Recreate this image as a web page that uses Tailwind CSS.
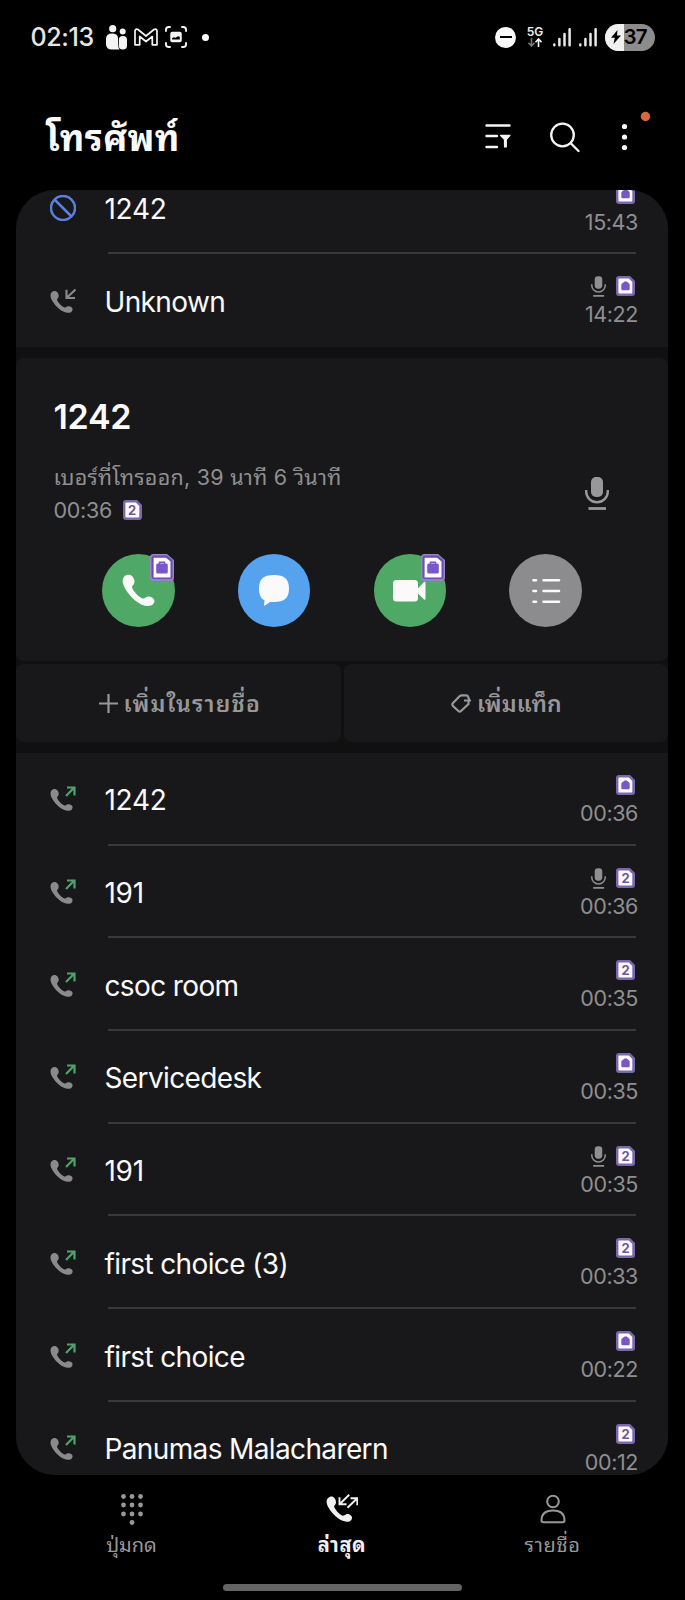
<!DOCTYPE html>
<html lang="th">
<head>
  <meta charset="utf-8" />
  <title>โทรศัพท์</title>
  <meta name="viewport" content="width=device-width, initial-scale=1" />
  <script src="https://cdn.jsdelivr.net/npm/@tailwindcss/browser@4"></script>
</head>
<body class="bg-black text-[#fafafa] font-['Inter','Noto_Sans_Thai_Looped','Loma','Waree','Garuda','Noto_Sans_Thai','Noto_Sans',sans-serif]">
<svg class="hidden">
  <symbol id="phone" viewBox="0 0 24 24">
    <path d="M3.2 0.8C0.7 2 .1 4.4.8 7.2c1.600 5.200 7.800 12.400 13.600 15.100 2.900 1.300 6.600 1.600 8.300-.4 1.300-1.500 1.200-3.200-.2-4.300-1.400-1.100-3.100-1.600-4.600-.9-1.200.600-1.900 1.500-3.300.9C11.900 16.500 8.700 12.900 7.500 10.300c-.6-1.500.8-2 1.300-3.200.6-1.500.200-3.400-.9-4.900C6.700.500 4.900.100 3.200.800Z" fill="currentColor"/>
  </symbol>
  <symbol id="out" viewBox="0 0 26 26">
    <use href="#phone" x="0" y="2.500" width="23" height="23"/>
    <path d="M16 10 24.300 1.500M17 1.500h7.500v8" fill="none" stroke="#4fa36a" stroke-width="2.200"/>
  </symbol>
  <symbol id="in" viewBox="0 0 26 26">
    <use href="#phone" x="0" y="2.500" width="23" height="23"/>
    <path d="M25.500 1.500 17 9.500M16.500 1.800v8.200h8.500" fill="none" stroke="currentColor" stroke-width="2.100"/>
  </symbol>
  <symbol id="blocked" viewBox="0 0 26 26">
    <path d="M13 1a12 12 0 1 0 0 24 12 12 0 0 0 0-24ZM4.500 4.500l17 17" fill="none" stroke="#5b7fdc" stroke-width="2.500"/>
  </symbol>
  <symbol id="mic" viewBox="0 0 24 33">
    <rect x="6" y="0" width="12" height="20" rx="5" fill="currentColor"/>
    <path d="M1.200 13v1.500a10.800 10.800 0 0 0 21.600 0V13" fill="none" stroke="currentColor" stroke-width="2.400"/>
    <path d="M3.500 31.500h17.500" stroke="currentColor" stroke-width="2.800"/>
  </symbol>
  <symbol id="sim" viewBox="0 0 19 20">
    <path d="M3 0h11L19 5v12a3 3 0 0 1-3 3H3A3 3 0 0 1 0 17V3A3 3 0 0 1 3 0Z" fill="#7a68ae"/>
    <path d="M3.400 2.500h9.400L16.300 6v10.500q0 1-1 1H3.400q-1 0-1-1v-13q0-1 1-1Z" fill="#fdf9ff"/>
  </symbol>
  <symbol id="bag" viewBox="0 0 19 20">
    <use href="#sim" width="19" height="20"/>
    <path d="M7 6.800 8.500 5.500h2.200l1.500 1.300c1 .4 1.500 1.200 1.500 2.400v3.600c0 1-.6 1.500-1.500 1.500H6.800c-.9 0-1.500-.5-1.500-1.500V9.200C5.300 8 6 7.200 7 6.800Z" fill="#7757c4"/>
  </symbol>
  <symbol id="bagLg" viewBox="0 0 24 27">
    <path d="M3.500 0h13.500L24 6v17.500a3.500 3.500 0 0 1-3.500 3.500h-17A3.500 3.500 0 0 1 0 23.500v-20A3.500 3.500 0 0 1 3.500 0Z" fill="#9488bb"/>
    <path d="M4 1.500h13L22.500 6v16.500a2.500 2.500 0 0 1-2.500 2.500H4a2.500 2.500 0 0 1-2.500-2.500V4A2.500 2.500 0 0 1 4 1.500Z" fill="#6b4db5"/>
    <path d="M3.600 3.700h12.500L20.500 7.500v16H3.600Z" fill="#fdf9ff"/>
    <path d="M9.500 10V8.300h5V10" fill="none" stroke="#7757c4" stroke-width="1.400"/>
    <rect x="6.200" y="9.500" width="11.600" height="10" rx="1.500" fill="#7757d0"/>
  </symbol>
</svg>

<div class="w-[685px] h-[1600px] flex flex-col overflow-hidden">
  <!-- status bar -->
  <div class="h-[74px] shrink-0 flex items-center justify-between pl-[30.500px] pr-[30.500px]">
    <div class="flex items-center">
      <span class="w-[64px] pt-px text-[25px] leading-none font-medium text-[#e6e6e6] whitespace-nowrap tracking-[-0.4px]">02:13</span>
      <svg class="ml-[11.500px] w-[21px] h-[25px]" viewBox="0 0 21 25" fill="#f5f5f5">
        <circle cx="6.700" cy="3.700" r="3.600"/><circle cx="16.700" cy="6.600" r="3"/>
        <path d="M0 14q0-5.500 6-5.500t6 4.500v6q0 3 1.500 5.500H6q-6 0-6-5.500Z"/>
        <rect x="12.800" y="11" width="8.200" height="13.500" rx="4"/>
      </svg>
      <svg class="ml-[7px] w-[24px] h-[18px]" viewBox="0 0 24 18" fill="none" stroke="#f5f5f5" stroke-width="1.700" stroke-linejoin="round">
        <path d="M1 16.800V3Q1.500.500 4 1.500L12 8l8-6.500q2.500-1 3 1.500v13.800h-4.700V8.500L12 13.500 5.700 8.500v8.300Z"/>
      </svg>
      <svg class="ml-[7px] w-[22px] h-[22px]" viewBox="0 0 23 23">
        <path d="M1 6V4q0-3 3-3h2M17 1h2q3 0 3 3v2M22 17v2q0 3-3 3h-2M6 22H4q-3 0-3-3v-2" fill="none" stroke="#f5f5f5" stroke-width="2"/>
        <rect x="5.500" y="6" width="12" height="11" rx="2" fill="#f5f5f5"/>
        <path d="M7.500 14v-1.500l2-.8 1.500.6 2.500-1.700 2 .6V14Z" fill="#000"/>
      </svg>
      <span class="ml-[15px] size-[7px] rounded-full bg-white"></span>
    </div>
    <div class="flex items-center">
      <span class="size-[21px] rounded-full bg-[#fafafa] flex items-center justify-center"><span class="w-[12px] h-[2px] bg-black"></span></span>
      <div class="ml-[11px] w-[16px] flex flex-col items-center">
        <span class="text-[12px] leading-[10px] font-semibold text-[#eee]">5G</span>
        <svg class="mt-[1px] w-[14px] h-[9px]" viewBox="0 0 14 9" fill="none" stroke-width="1.600">
          <path d="M3.500 0v8M.5 4.800 3.500 8l3-3.200" stroke="#777"/><path d="M10.500 9V1M7.500 4.200l3-3.200 3 3.200" stroke="#f5f5f5"/>
        </svg>
      </div>
      <svg class="ml-[9.500px] w-[18px] h-[19px]" viewBox="0 0 18 19" stroke="#e8e8e8" stroke-width="2.500" stroke-linecap="round">
        <path d="M1.300 16.500v.8M6.400 11v6.300M11.500 6v11.300M16.600 1.200v16.100"/>
      </svg>
      <svg class="ml-[8.500px] w-[18px] h-[19px]" viewBox="0 0 18 19" stroke="#e8e8e8" stroke-width="2.500" stroke-linecap="round">
        <path d="M1.300 16.500v.8M6.400 11v6.300M11.500 6v11.300M16.600 1.200v16.100"/>
      </svg>
      <div class="ml-[7.500px] w-[50px] h-[27px] rounded-full overflow-hidden bg-[#8c8c8c] flex items-center text-black">
        <div class="w-[19px] h-full bg-[#f0f0f0] flex items-center justify-end">
          <svg class="w-[10px] h-[14px] mr-[3px]" viewBox="0 0 10 14"><path d="M6.500 0 0 7.800h3.800L2.500 14 10 5.500H6Z"/></svg>
        </div>
        <span class="pt-px text-[20.500px] leading-none font-semibold tracking-[-0.7px]">37</span>
      </div>
    </div>
  </div>

  <!-- title bar -->
  <div class="h-[116px] shrink-0 flex items-start pt-[40px]">
    <h1 class="ml-[46px] w-[138px] h-[45px] pt-[2px] text-[36px] leading-[45px] font-bold whitespace-nowrap tracking-[0.3px]">โทรศัพท์</h1>
    <svg class="ml-[301px] mt-[9px] w-[26px] h-[26px]" viewBox="0 0 26 26" stroke="#f5f5f5" stroke-width="2.400" stroke-linecap="round">
      <path d="M1.500 2.500h23M1.500 13h10.500M1.500 24h10.500"/>
      <path d="M15.500 12.300h9.500l-3.700 4.400v7.300h-1.800v-7.300Z" fill="#f5f5f5" stroke-width="1.200" stroke-linejoin="round"/>
    </svg>
    <svg class="ml-[39px] mt-[7.500px] w-[30px] h-[31px]" viewBox="0 0 30 31" fill="none" stroke="#f5f5f5" stroke-width="2.300" stroke-linecap="round">
      <circle cx="12.500" cy="13" r="11.300"/><path d="m20.500 21 8 8"/>
    </svg>
    <svg class="ml-[41px] -mt-[3px] w-[30px] h-[40px]" viewBox="0 0 30 40" fill="#fafafa">
      <circle cx="3.500" cy="15.500" r="2.600"/><circle cx="3.500" cy="26" r="2.600"/><circle cx="3.500" cy="36.500" r="2.600"/>
      <circle cx="24.500" cy="5.500" r="4.700" fill="#d9673a"/>
    </svg>
  </div>

  <!-- call log -->
  <main class="ml-[16px] w-[652px] h-[1284.500px] shrink-0 rounded-[39px] overflow-hidden bg-[#101011]">
    <div id="older" class="-mt-[28.500px] bg-[#18181a]"></div>

    <section class="mt-[11.500px] h-[302.500px] rounded-[8px] bg-[#18181a]">
      <div class="h-[196px] flex items-start justify-between">
        <div class="pl-[37.500px] pt-[36.500px]">
          <h2 class="text-[34px] leading-[44px] font-semibold tracking-[-0.3px]">1242</h2>
          <p class="mt-[22px] h-[33px] text-[21.500px] leading-[33px] text-[#8f8f91] whitespace-nowrap tracking-[0.260px]">เบอร์ที่โทรออก, 39 นาที 6 วินาที</p>
          <p class="flex items-center text-[21.500px] leading-[33px] text-[#8f8f91]">
            <span class="w-[69px] tracking-[-0.3px]">00:36</span>
            <span class="relative w-[19px] h-[20px]"><svg class="block w-[19px] h-[20px]"><use href="#sim"/></svg><b class="absolute inset-0 text-center text-[13px] leading-[20px] text-[#6b5a98]">2</b></span>
          </p>
        </div>
        <svg class="mt-[118.500px] mr-[59px] w-[24px] h-[33px] text-[#98989a]"><use href="#mic"/></svg>
      </div>
      <div class="pl-[86px] flex gap-[63.300px]">
        <div class="relative size-[72.500px] rounded-full bg-[#4fa866] flex items-center justify-center">
          <svg class="w-[33px] h-[33px]"><use href="#phone"/></svg>
          <svg class="absolute right-[1px] top-0 w-[24px] h-[27px]"><use href="#bagLg"/></svg>
        </div>
        <div class="size-[72.500px] rounded-full bg-[#55a3ee] flex items-center justify-center">
          <svg class="w-[30px] h-[31px]" viewBox="0 0 30 31" fill="#fafafa"><path d="M15 0C25.500 0 30 4 30 13.500S25.500 27 15 27h-4L6 30.500c-.7.400-1.200 0-1-1l.6-4C1.500 23.300 0 19.500 0 13.500 0 4 4.500 0 15 0Z"/></svg>
        </div>
        <div class="relative size-[72.500px] rounded-full bg-[#4fa866] flex items-center justify-center">
          <svg class="w-[33px] h-[22px]" viewBox="0 0 33 22" fill="#fafafa"><rect width="25" height="21.500" rx="3.500"/><path d="M24 9.500 31 2q1.500-1 1.500 1v15.500q0 2-1.500 1L24 12.500Z"/></svg>
          <svg class="absolute right-[1px] top-0 w-[24px] h-[27px]"><use href="#bagLg"/></svg>
        </div>
        <div class="size-[72.500px] rounded-full bg-[#8c8c8e] flex items-center justify-center">
          <svg class="w-[30px] h-[26px]" viewBox="0 0 30 26" stroke="#fafafa" stroke-width="2.600" stroke-linecap="round"><path d="M2.500 2.200H5M12.500 2.200H28M2.500 13H5M12.500 13H28M2.500 23.800H5M12.500 23.800H28"/></svg>
        </div>
      </div>
    </section>

    <div class="mt-[3.500px] h-[77.500px] flex gap-[3.500px] text-[23px] font-semibold text-[#98989a]">
      <div class="w-[324.500px] rounded-[8px] bg-[#18181a] flex items-center pl-[82.500px]">
        <svg class="w-[19px] h-[19px]" viewBox="0 0 19 19" stroke="currentColor" stroke-width="2.200"><path d="M9.500 0v19M0 9.500h19"/></svg>
        <span class="ml-[6px] pt-[2px] whitespace-nowrap tracking-[1.2px]">เพิ่มในรายชื่อ</span>
      </div>
      <div class="flex-1 rounded-[8px] bg-[#18181a] flex items-center pl-[107px]">
        <svg class="w-[21px] h-[19px]" viewBox="0 0 21 19" fill="none" stroke="currentColor" stroke-width="2.200"><path d="M20 6.500H13M17.500 6.300V10L10 17q-1.300 1.200-2.600 0L2 12q-1.300-1.500 0-3L8.500 2.200Q9.500 1.300 11 1.300h4q1.700 0 2.300 1.700l.9 3.300"/></svg>
        <span class="ml-[5px] pt-[2px] whitespace-nowrap tracking-[0.1px]">เพิ่มแท็ก</span>
      </div>
    </div>

    <div id="recent" class="mt-[11px] bg-[#18181a]"></div>
  </main>

  <!-- bottom tabs -->
  <nav class="h-[109px] shrink-0 flex justify-center pr-px text-[20px] text-[#98989a]">
    <div class="w-[210.500px] flex flex-col items-center pt-[18.500px]">
      <svg class="w-[24px] h-[34px]" viewBox="0 0 24 34" fill="currentColor">
        <circle cx="3.500" cy="3.500" r="2.400"/><circle cx="12" cy="3.500" r="2.400"/><circle cx="20.500" cy="3.500" r="2.400"/>
        <circle cx="3.500" cy="12" r="2.400"/><circle cx="12" cy="12" r="2.400"/><circle cx="20.500" cy="12" r="2.400"/>
        <circle cx="3.500" cy="21" r="2.400"/><circle cx="12" cy="21" r="2.400"/><circle cx="20.500" cy="21" r="2.400"/>
        <circle cx="12" cy="29.500" r="2.400"/>
      </svg>
      <span class="mt-[2.500px] leading-[30px]">ปุ่มกด</span>
    </div>
    <div class="w-[210.500px] flex flex-col items-center pt-[18.500px] text-[#f0f0f0] font-bold">
      <svg class="w-[32px] h-[34px]" viewBox="0 0 32 34">
        <use href="#phone" x="0" y="3" width="26.500" height="26.500"/>
        <path d="M23.200 1.800 14 10.700M13.500 4.200v7h7M21.500 14.800 31 5.500M24.500 5.200h6.800v7" fill="none" stroke="currentColor" stroke-width="1.900"/>
      </svg>
      <span class="mt-[2.500px] leading-[30px] tracking-[0.5px]">ล่าสุด</span>
    </div>
    <div class="w-[210.500px] flex flex-col items-center pt-[18.500px]">
      <svg class="w-[26px] h-[34px]" viewBox="0 0 26 34" fill="none" stroke="currentColor" stroke-width="2">
        <circle cx="13" cy="8.500" r="5.800"/><path d="M1.500 27.500c0-7 4.500-10 11.500-10s11.500 3 11.500 10q0 1.800-2 1.800h-19q-2 0-2-1.800Z"/>
      </svg>
      <span class="mt-[2.500px] leading-[30px] tracking-[0.6px]">รายชื่อ</span>
    </div>
  </nav>
  <div class="mx-auto w-[239px] h-[7px] shrink-0 rounded-full bg-[#646464]"></div>
</div>

<script>
const older = [
  { icon: 'blocked', name: '1242', time: '15:43', sim: 'bag' },
  { icon: 'in', name: 'Unknown', time: '14:22', sim: 'bag', rec: true },
];
const recent = [
  { icon: 'out', name: '1242', time: '00:36', sim: 'bag' },
  { icon: 'out', name: '191', time: '00:36', sim: '2', rec: true },
  { icon: 'out', name: 'csoc room', time: '00:35', sim: '2' },
  { icon: 'out', name: 'Servicedesk', time: '00:35', sim: 'bag' },
  { icon: 'out', name: '191', time: '00:35', sim: '2', rec: true },
  { icon: 'out', name: 'first choice (3)', time: '00:33', sim: '2' },
  { icon: 'out', name: 'first choice', time: '00:22', sim: 'bag' },
  { icon: 'out', name: 'Panumas Malacharern', time: '00:12', sim: '2' },
];

function simBadge(sim){
  if(sim === 'bag') return '<svg class="w-[19px] h-[20px]"><use href="#bag"/></svg>';
  return `<span class="relative w-[19px] h-[20px]"><svg class="block w-[19px] h-[20px]"><use href="#sim"/></svg><b class="absolute inset-0 text-center text-[13px] leading-[20px] text-[#6b5a98]">${sim}</b></span>`;
}

function row(c, last){
  const mic = c.rec ? '<svg class="w-[15px] h-[21px] text-[#8f8f91]"><use href="#mic"/></svg>' : '';
  // pure numbers are set a touch wider than names
  const tracking = /^\d+$/.test(c.name) ? 'tracking-[-0.3px]' : 'tracking-[-0.630px]';
  return `<div class="h-[92.700px] flex">
    <svg class="ml-[33.500px] mt-[33.500px] w-[26px] h-[26px] text-[#8a8a8c]"><use href="#${c.icon}"/></svg>
    <div class="ml-[32px] w-[528px] flex justify-between ${last ? '' : 'border-b-2 border-[#39393b]'}">
      <span class="-ml-[3px] pt-[29.500px] text-[28px] leading-[36px] whitespace-nowrap ${tracking}">${c.name}</span>
      <div class="pt-[22px] -mr-[2.500px] flex flex-col items-end">
        <div class="h-[20px] flex gap-[10px] mr-[3px]">${mic}${simBadge(c.sim)}</div>
        <span class="mt-[5px] text-[21.500px] leading-[26px] tracking-[-0.4px] text-[#8f8f91]">${c.time}</span>
      </div>
    </div>
  </div>`;
}

function render(id, calls){
  document.getElementById(id).innerHTML = calls.map((c, i) => row(c, i === calls.length - 1)).join('');
}
render('older', older);
render('recent', recent);
</script>
</body>
</html>
